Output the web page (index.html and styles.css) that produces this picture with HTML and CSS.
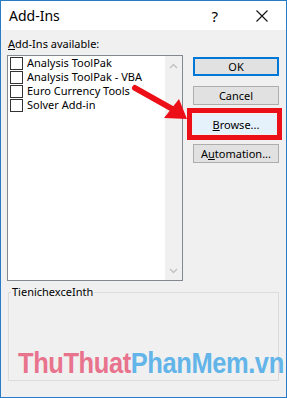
FILE: index.html
```html
<!DOCTYPE html>
<html lang="en">
<head>
    <meta charset="UTF-8">
    <meta name="viewport" content="width=device-width, initial-scale=1.0">
    <title>Add-Ins</title>
    <link rel="stylesheet" href="styles.css">
</head>
<body>
    <div class="dialog">
        <div class="titlebar">
            <span class="title">Add-Ins</span>
            <span class="help">?</span>
            <svg class="close" width="12" height="12" viewBox="0 0 12 12">
                <path d="M0.5 0.5 L11.5 11.5 M11.5 0.5 L0.5 11.5" stroke="#111" stroke-width="1.1" fill="none"/>
            </svg>
        </div>

        <div class="content">
            <div class="main">
                <div class="left">
                    <div class="label"><u>A</u>dd-Ins available:</div>
                    <div class="listbox">
                        <ul class="items">
                            <li><span class="check"></span>Analysis ToolPak</li>
                            <li><span class="check"></span>Analysis ToolPak - VBA</li>
                            <li><span class="check"></span>Euro Currency Tools</li>
                            <li><span class="check"></span>Solver Add-in</li>
                        </ul>
                        <div class="scrollbar">
                            <svg width="9" height="6" viewBox="0 0 9 6">
                                <path d="M1 5 L4.5 1.5 L8 5" stroke="#c2c2c2" stroke-width="1.4" fill="none"/>
                            </svg>
                            <svg width="9" height="6" viewBox="0 0 9 6">
                                <path d="M1 1 L4.5 4.5 L8 1" stroke="#c2c2c2" stroke-width="1.4" fill="none"/>
                            </svg>
                        </div>
                    </div>
                </div>

                <div class="buttons">
                    <button class="btn default">OK</button>
                    <button class="btn">Cancel</button>
                    <button class="btn hover"><u>B</u>rowse...</button>
                    <button class="btn">A<u>u</u>tomation...</button>
                </div>
            </div>

            <fieldset class="group">
                <legend>TienichexceInth</legend>
            </fieldset>
        </div>

        <!-- annotation drawn over the dialog -->
        <svg class="marks" width="287" height="398" viewBox="0 0 287 398">
            <rect x="189.5" y="110.5" width="90" height="27" fill="none" stroke="#ec0f17" stroke-width="5"/>
            <path d="M135 88 L176 111" stroke="#ec0f17" stroke-width="6" stroke-linecap="round" fill="none"/>
            <path d="M187 119 L164 118 L179 99 Z" fill="#ec0f17"/>
        </svg>

        <div class="watermark"><span class="pink">ThuThuat</span><span class="blue">PhanMem.vn</span></div>
    </div>
</body>
</html>
```

FILE: styles.css
```css
body {
    margin: 0;
    padding: 0;
    font-family: "Noto Sans", "Open Sans", sans-serif;
    font-size: 11px;
    color: #000;
}

.dialog {
    position: relative;
    width: 287px;
    height: 398px;
    box-sizing: border-box;
    border: 1px solid #2a7bc6;
    background-color: #f0f0f0;
    display: flex;
    flex-direction: column;
    overflow: hidden;
}

.titlebar {
    height: 29px;
    background-color: #fff;
    display: flex;
    align-items: center;
    padding-left: 8px;
    flex-shrink: 0;
}

.title {
    font-size: 14px;
    flex: 1;
}

.help {
    font-size: 15px;
    margin-right: 38px;
}

.close {
    margin-right: 18px;
}

.content {
    padding: 6px 7px 0 6px;
    display: flex;
    flex-direction: column;
}

.main {
    display: flex;
}

.left {
    width: 176px;
}

.label {
    height: 16px;
    line-height: 16px;
    margin-bottom: 3px;
    padding-left: 1px;
}

.listbox {
    height: 226px;
    box-sizing: border-box;
    border: 1px solid #828790;
    background-color: #fff;
    display: flex;
}

.items {
    list-style: none;
    margin: 0;
    padding: 0 0 0 2px;
    flex: 1;
}

.items li {
    height: 14px;
    line-height: 14px;
    display: flex;
    align-items: center;
    gap: 4px;
    white-space: nowrap;
}

.check {
    width: 11px;
    height: 11px;
    border: 1px solid #333;
    background-color: #fff;
    flex-shrink: 0;
}

.scrollbar {
    width: 17px;
    background-color: #f0f0f0;
    display: flex;
    flex-direction: column;
    align-items: center;
    justify-content: space-between;
    padding: 7px 0 6px;
}

.buttons {
    margin-left: 10px;
    margin-top: 21px;
    display: flex;
    flex-direction: column;
    gap: 10px;
}

.btn {
    width: 86px;
    height: 19px;
    padding: 0;
    font-family: inherit;
    font-size: 11px;
    line-height: 15px;
    background-color: #e1e1e1;
    border: 1px solid #adadad;
    color: #000;
}

.btn.default {
    border: 2px solid #0078d7;
}

.btn.hover {
    background-color: #e5f1fb;
    border-color: #e5f1fb;
}

.group {
    margin: 4px 0 0 1px;
    padding: 0;
    height: 94px;
    border: 1px solid #dcdcdc;
}

.group legend {
    padding: 0 1px;
    margin-left: 2px;
    line-height: 14px;
}

.marks {
    position: absolute;
    left: -1px;
    top: -1px;
    pointer-events: none;
}

.watermark {
    position: absolute;
    left: 17px;
    top: 345px;
    font-family: "Liberation Sans", sans-serif;
    font-weight: bold;
    font-size: 30px;
    letter-spacing: -0.5px;
    white-space: nowrap;
    transform: scaleX(0.85);
    transform-origin: left top;
}

.pink {
    color: #e8738c;
}

.blue {
    color: #63b5e9;
}
```
